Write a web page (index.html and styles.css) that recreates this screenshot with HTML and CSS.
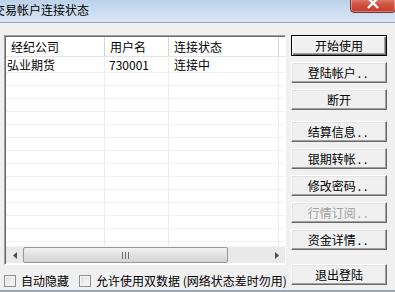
FILE: index.html
```html
<!DOCTYPE html>
<html>
<head>
<meta charset="utf-8">
<link rel="stylesheet" href="styles.css">
</head>
<body>
<div class="window">
  <div class="titlebar">
    <span class="title">交易帐户连接状态</span>
    <div class="close"><svg width="12" height="9" viewBox="0 0 12 9"><path d="M1 -2 L6 3 L11 -2 M1 8 L6 3 L11 8" stroke="#fff" stroke-width="2.4" fill="none"/></svg></div>
  </div>
  <div class="content">
    <div class="left">
      <div class="list">
        <div class="grid head">
          <div class="hc c1">经纪公司</div>
          <div class="hc c2">用户名</div>
          <div class="hc c3">连接状态</div>
          <div class="hc c4"></div>
        </div>
        <div class="rows">
          <div class="grid row first"><div class="cell b1">弘业期货</div><div class="cell b2">730001</div><div class="cell b3">连接中</div><div class="cell"></div></div>
          <div class="grid row"><div class="cell"></div><div class="cell"></div><div class="cell"></div><div class="cell"></div></div>
          <div class="grid row"><div class="cell"></div><div class="cell"></div><div class="cell"></div><div class="cell"></div></div>
          <div class="grid row"><div class="cell"></div><div class="cell"></div><div class="cell"></div><div class="cell"></div></div>
          <div class="grid row"><div class="cell"></div><div class="cell"></div><div class="cell"></div><div class="cell"></div></div>
          <div class="grid row"><div class="cell"></div><div class="cell"></div><div class="cell"></div><div class="cell"></div></div>
          <div class="grid row"><div class="cell"></div><div class="cell"></div><div class="cell"></div><div class="cell"></div></div>
          <div class="grid row"><div class="cell"></div><div class="cell"></div><div class="cell"></div><div class="cell"></div></div>
          <div class="grid row"><div class="cell"></div><div class="cell"></div><div class="cell"></div><div class="cell"></div></div>
          <div class="grid row"><div class="cell"></div><div class="cell"></div><div class="cell"></div><div class="cell"></div></div>
          <div class="grid row"><div class="cell"></div><div class="cell"></div><div class="cell"></div><div class="cell"></div></div>
          <div class="grid row"><div class="cell"></div><div class="cell"></div><div class="cell"></div><div class="cell"></div></div>
          <div class="grid row"><div class="cell"></div><div class="cell"></div><div class="cell"></div><div class="cell"></div></div>
          <div class="grid row"><div class="cell"></div><div class="cell"></div><div class="cell"></div><div class="cell"></div></div>
          <div class="grid row"><div class="cell"></div><div class="cell"></div><div class="cell"></div><div class="cell"></div></div>
        </div>
        <div class="hscroll">
          <div class="arrow"><svg width="4" height="7" viewBox="0 0 4 7"><path d="M4 0 L0 3.5 L4 7 Z" fill="#4d4d4d"/></svg></div>
          <div class="thumb"><svg width="8" height="7" viewBox="0 0 8 7"><path d="M0.5 0 V7 M3.5 0 V7 M6.5 0 V7" stroke="#6b6b6b" stroke-width="1"/></svg></div>
          <div class="track"></div>
          <div class="arrow"><svg width="4" height="7" viewBox="0 0 4 7"><path d="M0 0 L4 3.5 L0 7 Z" fill="#4d4d4d"/></svg></div>
        </div>
      </div>
      <div class="checks">
        <label class="chk"><span class="box"></span>自动隐藏</label>
        <label class="chk second"><span class="box"></span>允许使用双数据 (网络状态差时勿用)</label>
      </div>
    </div>
    <div class="buttons">
      <div class="btn default">开始使用</div>
      <div class="btn">登陆帐户<span class="dots">..</span></div>
      <div class="btn">断开</div>
      <div class="btn gap">结算信息<span class="dots">..</span></div>
      <div class="btn">银期转帐<span class="dots">..</span></div>
      <div class="btn">修改密码<span class="dots">..</span></div>
      <div class="btn disabled">行情订阅<span class="dots">..</span></div>
      <div class="btn">资金详情<span class="dots">..</span></div>
      <div class="btn last">退出登陆</div>
    </div>
  </div>
</div>
</body>
</html>
```
FILE: styles.css
```css
* { box-sizing: border-box; }
html, body { margin: 0; padding: 0; }
body {
  width: 395px;
  height: 292px;
  overflow: hidden;
  background: #f0f0f0;
  font-family: "Noto Sans CJK SC", "Liberation Sans", sans-serif;
  font-size: 12px;
  color: #000;
}
.window {
  height: 292px;
  border-bottom: 2px solid #9aa6b2;
  display: flex;
  flex-direction: column;
}
.titlebar {
  height: 23px;
  background: linear-gradient(#bcd2ea, #d9e6f4);
  border-bottom: 1px solid #8fa2b6;
  position: relative;
  flex: none;
}
.title {
  display: block;
  margin-left: -7px;
  line-height: 20px;
  font-size: 12px;
  white-space: nowrap;
}
.close {
  position: absolute;
  left: 350px;
  top: -6px;
  width: 46px;
  height: 19px;
  border: 1px solid #7a3330;
  border-radius: 0 0 4px 4px;
  background: linear-gradient(#e8a394, #d0533f 55%, #c23b2a);
  box-shadow: inset 0 0 0 1px rgba(255,255,255,0.35);
  display: flex;
  justify-content: center;
  align-items: flex-start;
  padding-top: 5px;
}
.content {
  flex: 1;
  display: flex;
  padding: 12px 0 0 4px;
}
.left {
  width: 282px;
  flex: none;
  display: flex;
  flex-direction: column;
}
.list {
  height: 230px;
  background: #fff;
  border-style: solid;
  border-width: 1px;
  border-color: #a0a0a0 #fff #fff #a0a0a0;
  box-shadow: inset 1px 1px 0 #696969;
  display: flex;
  flex-direction: column;
  padding: 1px 0 0 1px;
}
.grid {
  display: grid;
  grid-template-columns: 99px 64px 110px 1fr;
}
.head {
  height: 20px;
  border-bottom: 1px solid #e5e5e5;
  flex: none;
}
.hc {
  line-height: 19px;
  padding-left: 5px;
  border-right: 1px solid #d5d5d5;
  white-space: nowrap;
}
.hc.c4 { border-right: none; }
.rows {
  flex: 1;
  overflow: hidden;
}
.row { height: 13px; }
.row.first { height: 16px; }
.row.first .cell { line-height: 15px; }
.cell {
  border-right: 1px solid #ececec;
  border-bottom: 1px solid #f0f0f0;
  line-height: 12px;
  white-space: nowrap;
}
.cell:last-child { border-right: none; }
.b1 { padding-left: 1px; }
.b2 { padding-left: 4px; }
.b3 { padding-left: 5px; }
.hscroll {
  height: 17px;
  flex: none;
  display: flex;
  background: #e9e9e9;
  margin-bottom: 1px;
  border-top: 1px solid #f4f4f4;
}
.arrow {
  width: 17px;
  display: flex;
  align-items: center;
  justify-content: center;
  flex: none;
}
.thumb {
  width: 205px;
  flex: none;
  border: 1px solid #989898;
  border-radius: 2px;
  background: linear-gradient(#f2f2f2, #e2e2e2 50%, #d4d4d4);
  display: flex;
  align-items: center;
  justify-content: center;
}
.track { flex: 1; }
.checks {
  display: flex;
  align-items: center;
  margin-top: 8px;
  white-space: nowrap;
}
.chk {
  display: flex;
  align-items: center;
  line-height: 16px;
}
.chk.second { margin-left: 10px; }
.box {
  width: 12px;
  height: 12px;
  border: 1px solid #8e8f8f;
  background: linear-gradient(135deg, #dcdcdc, #fbfbfb);
  margin-right: 5px;
  box-shadow: inset 0 0 0 1px #f4f4f4;
}
.buttons {
  margin-left: 5px;
  width: 96px;
  display: flex;
  flex-direction: column;
}
.btn {
  height: 21px;
  margin-bottom: 6px;
  background: #f0f0f0;
  border-style: solid;
  border-width: 1px;
  border-color: #fff #696969 #696969 #fff;
  box-shadow: inset -1px -1px 0 #a0a0a0, inset 1px 1px 0 #e3e3e3;
  text-align: center;
  line-height: 19px;
  white-space: nowrap;
}
.btn.default {
  border: 1px solid #000;
  box-shadow: inset 1px 1px 0 #fff, inset -1px -1px 0 #696969, inset -2px -2px 0 #a0a0a0;
}
.btn.gap { margin-top: 5px; }
.btn.last { margin-top: 8px; }
.btn.disabled { color: #a0a0a0; }
.dots { letter-spacing: 3px; margin-left: 2px; }
```
